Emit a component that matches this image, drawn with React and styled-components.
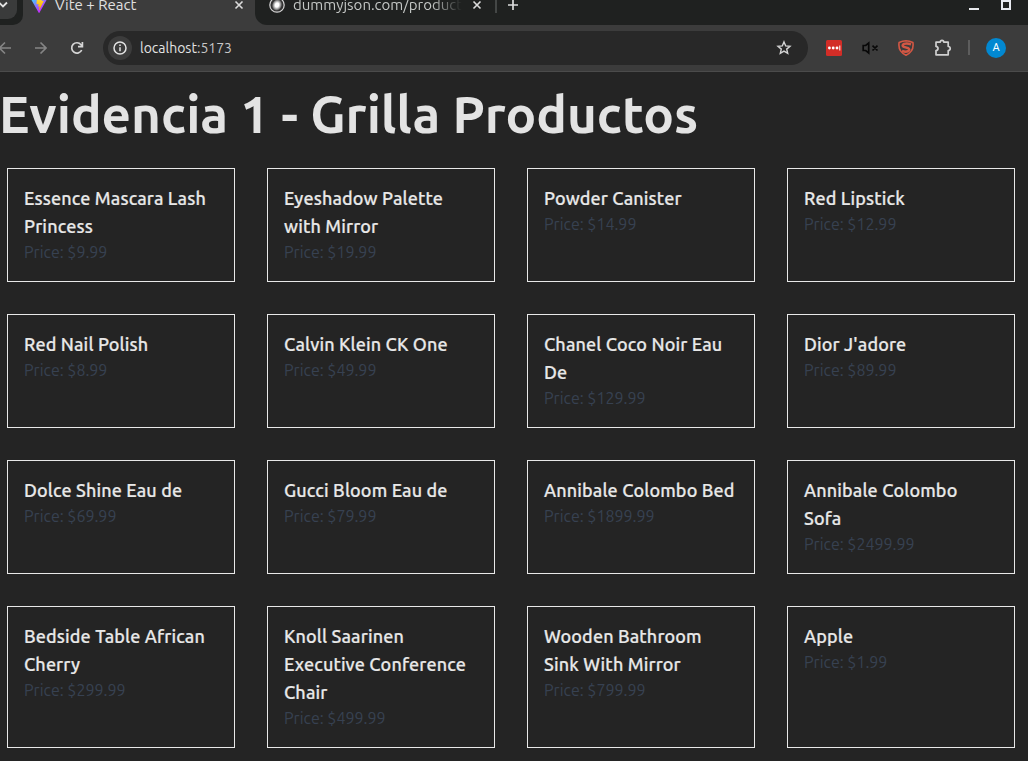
import React from "react";
import styled, { createGlobalStyle } from "styled-components";

const GlobalStyle = createGlobalStyle`
  *, *::before, *::after { box-sizing: border-box; }
  html, body { margin: 0; height: 100%; overflow: hidden; background: #242424; }
  body { font-family: Ubuntu, "Noto Sans", "Open Sans", sans-serif; color: #e3e3e3; }
  h1, h2, p { margin: 0; }
`;

const Window = styled.div`
  display: flex;
  flex-direction: column;
  width: 1028px;
  height: 761px;
  overflow: hidden;
`;

const TabStrip = styled.header`
  display: flex;
  height: 25px;
  background: #3c3c3c;
`;

const StripStart = styled.div`
  width: 23px;
  background: #1f2120;
  border-bottom-right-radius: 10px;
`;

const TabSearch = styled.div`
  width: 17px;
  height: 19px;
  background: #3a3b3b;
  border-bottom-right-radius: 9px;
  svg { display: block; }
`;

const ActiveTab = styled.div`
  display: flex;
  width: 232px;
  height: 12px;
  padding: 0 10px 0 8px;
  align-items: center;
`;

const StripRest = styled.div`
  display: flex;
  flex: 1;
  align-items: flex-start;
  padding-left: 14px;
  background: #1f2120;
  border-bottom-left-radius: 12px;
`;

const TabTitle = styled.span`
  flex: none;
  width: ${(p) => p.$width}px;
  height: 20px;
  margin: ${(p) => p.$top}px 0 0 ${(p) => p.$gap}px;
  white-space: nowrap;
  font-size: 15px;
  line-height: 20px;
  color: ${(p) => (p.$faded ? "#c4c7c5" : "#e0e0e0")};
  ${(p) => p.$faded && "mask-image: linear-gradient(90deg, #000 82%, transparent);"}
`;

const Glyph = styled.svg`
  display: block;
  flex: none;
  margin-left: ${(p) => p.$gap || 0}px;
`;

const Toolbar = styled.div`
  display: flex;
  align-items: center;
  height: 47px;
  padding-bottom: 1px;
  background: #3c3c3c;
  border-bottom: 1px solid #4b4b4b;
`;

const AddressBar = styled.div`
  display: flex;
  align-items: center;
  width: 705px;
  height: 34px;
  margin-left: 19px;
  padding: 0 16px 0 5px;
  border-radius: 17px;
  background: #282828;
`;

const SiteInfo = styled.div`
  display: grid;
  place-items: center;
  width: 24px;
  height: 24px;
  border-radius: 50%;
  background: #3c3c3c;
`;

const Address = styled.span`
  flex: 1;
  margin-left: 8px;
  font-size: 14px;
  line-height: 20px;
  color: #e3e3e3;
  span { color: #c7c7c7; }
`;

const Divider = styled.div`
  width: 2px;
  height: 15px;
  margin-left: 16px;
  background: #5d5d5d;
`;

const Avatar = styled.div`
  width: 20px;
  height: 20px;
  margin-left: 16px;
  border-radius: 50%;
  background: #0288d1;
  color: #fff;
  font: 400 11px/20px Roboto, sans-serif;
  text-align: center;
`;

const Page = styled.main`
  flex: 1;
  background: #242424;
`;

const Heading = styled.h1`
  height: 96px;
  margin-left: -1px;
  padding-top: 14px;
  font-size: 51.2px;
  line-height: 56px;
  font-weight: 600;
  white-space: nowrap;
  color: #e3e3e3;
`;

const Grid = styled.section`
  display: grid;
  grid-template-columns: repeat(4, 228px);
  gap: 32px;
  padding-left: 7px;
`;

const Card = styled.article`
  padding: 15px 18px 17px 16px;
  border: 1px solid #e8e8e8;
`;

const Name = styled.h2`
  font-size: 18px;
  line-height: 28px;
  font-weight: 500;
  letter-spacing: 0.13px;
  -webkit-text-stroke: 0.2px #e8e8e8;
  color: #e8e8e8;
`;

const Price = styled.p`
  font-size: 16px;
  line-height: 24px;
  font-weight: 400;
  color: #374151;
`;

const products = [
  ["Essence Mascara Lash Princess", "9.99"],
  ["Eyeshadow Palette with Mirror", "19.99"],
  ["Powder Canister", "14.99"],
  ["Red Lipstick", "12.99"],
  ["Red Nail Polish", "8.99"],
  ["Calvin Klein CK One", "49.99"],
  ["Chanel Coco Noir Eau De", "129.99"],
  ["Dior J'adore", "89.99"],
  ["Dolce Shine Eau de", "69.99"],
  ["Gucci Bloom Eau de", "79.99"],
  ["Annibale Colombo Bed", "1899.99"],
  ["Annibale Colombo Sofa", "2499.99"],
  ["Bedside Table African Cherry", "299.99"],
  ["Knoll Saarinen Executive Conference Chair", "499.99"],
  ["Wooden Bathroom Sink With Mirror", "799.99"],
  ["Apple", "1.99"],
];

const Close = ({ gap }) => (
  <Glyph $gap={gap} width="10" height="12" viewBox="0 0 10 12" stroke="#dcdcdc" strokeWidth="1.6">
    <path d="M1.5 1.5l7 7M8.5 1.5l-7 7" />
  </Glyph>
);

const TabIcon = styled(Glyph)`
  margin-top: -3px;
`;

const ViteLogo = () => (
  <TabIcon width="16" height="16" viewBox="0 0 256 257">
    <defs>
      <linearGradient id="shell" x1="-.8%" x2="57.6%" y1="7.7%" y2="78.4%">
        <stop offset="0" stopColor="#41d1ff" />
        <stop offset="1" stopColor="#bd34fe" />
      </linearGradient>
      <linearGradient id="bolt" x1="43%" x2="50%" y1="2%" y2="89%">
        <stop offset="0" stopColor="#ffea83" />
        <stop offset=".08" stopColor="#ffdd35" />
        <stop offset="1" stopColor="#ffa800" />
      </linearGradient>
    </defs>
    <path fill="url(#shell)" d="M255.153 37.938L134.897 252.976c-2.483 4.44-8.862 4.466-11.382.048L.875 37.958c-2.746-4.814 1.371-10.646 6.827-9.67l120.385 21.517a6.537 6.537 0 0 0 2.322-.004l117.867-21.483c5.438-.991 9.574 4.796 6.877 9.62Z" />
    <path fill="url(#bolt)" d="M185.432.063L96.44 17.501a3.268 3.268 0 0 0-2.634 3.014l-5.474 92.456a3.268 3.268 0 0 0 3.997 3.378l24.777-5.718c2.318-.535 4.413 1.507 3.936 3.838l-7.361 36.047c-.495 2.426 1.782 4.5 4.151 3.78l15.304-4.649c2.372-.72 4.652 1.36 4.15 3.788l-11.698 56.621c-.732 3.542 3.979 5.473 5.943 2.437l1.313-2.028l72.516-144.72c1.215-2.423-.88-5.186-3.54-4.672l-25.505 4.922c-2.396.462-4.435-1.77-3.759-4.114l16.646-57.705c.677-2.35-1.37-4.583-3.769-4.113Z" />
  </TabIcon>
);

export default function App() {
  return (
    <>
      <GlobalStyle />
      <Window>
        <TabStrip>
          <StripStart>
            <TabSearch>
              <svg width="8" height="10" viewBox="0 0 8 10" fill="none" stroke="#e3e3e3" strokeWidth="1.8">
                <path d="M-1 2.5l4 4 4-4" />
              </svg>
            </TabSearch>
          </StripStart>
          <ActiveTab>
            <ViteLogo />
            <TabTitle $gap={8} $width={179} $top={-3}>Vite + React</TabTitle>
            <Close gap={0} />
          </ActiveTab>
          <StripRest>
            <TabIcon width="16" height="16" viewBox="0 0 16 16">
              <defs>
                <radialGradient id="orb">
                  <stop offset=".35" stopColor="#fff" />
                  <stop offset=".75" stopColor="#8b8b8b" />
                  <stop offset="1" stopColor="#303030" />
                </radialGradient>
              </defs>
              <circle cx="8" cy="8" r="7.2" fill="#333" stroke="#d5d5d5" strokeWidth="1.2" />
              <ellipse cx="8" cy="8" rx="5" ry="6" fill="url(#orb)" transform="rotate(20 8 8)" />
            </TabIcon>
            <TabTitle $gap={8} $width={169} $top={-5} $faded>dummyjson.com/product</TabTitle>
            <Close gap={10} />
            <Glyph $gap={13} width="2" height="13"><path d="M1 0v13" stroke="#444746" strokeWidth="2" /></Glyph>
            <Glyph $gap={10} width="12" height="12" stroke="#dcdcdc" strokeWidth="1.7"><path d="M6 0v10M1 5h10" /></Glyph>
            <Glyph $gap={450} width="10" height="12"><path d="M0 8h10v2H0z" fill="#e8eaed" /></Glyph>
            <Glyph $gap={22} width="10" height="12"><path d="M0 0h10v10H0zM2 2v6h6V2z" fill="#e8eaf0" fillRule="evenodd" /></Glyph>
          </StripRest>
        </TabStrip>

        <Toolbar>
          <Glyph width="12" height="14" viewBox="0 0 12 14" fill="none" stroke="#858585" strokeWidth="1.6"><path d="M11 7H0M5 1.5L-.5 7 5 12.5" /></Glyph>
          <Glyph $gap={23} width="12" height="14" viewBox="0 0 12 14" fill="none" stroke="#858585" strokeWidth="1.6"><path d="M0 7h11M5.5 1.5L11 7l-5.5 5.5" /></Glyph>
          <Glyph $gap={23} width="14" height="14" viewBox="0 0 14 14" fill="none" stroke="#d5d5d5" strokeWidth="1.7"><path d="M11.7 9A5.2 5.2 0 1 1 11 3.7L12.5 5M12.4 1v4.7H8" /></Glyph>
          <AddressBar>
            <SiteInfo>
              <svg width="14" height="14" viewBox="0 0 14 14" fill="none" stroke="#e3e3e3" strokeWidth="1.5">
                <circle cx="7" cy="7" r="6" /><path d="M7 6.2v4M7 3.5V5" />
              </svg>
            </SiteInfo>
            <Address>localhost<span>:5173</span></Address>
            <Glyph width="16" height="16" viewBox="0 0 16 16" fill="none" stroke="#d5d5d5" strokeWidth="1.4" strokeLinejoin="miter">
              <path d="M8 1.9l1.7 4 4.3.4-3.3 2.8 1 4.2L8 11.1l-3.7 2.2 1-4.2L2 6.3l4.3-.4z" />
            </Glyph>
          </AddressBar>
          <Glyph $gap={18} width="16" height="16" viewBox="0 0 16 16">
            <rect width="16" height="16" rx="1.5" fill="#d32d27" />
            <g fill="#fff"><circle cx="3.4" cy="8" r="1.4" /><circle cx="7.2" cy="8" r="1.4" /><circle cx="11" cy="8" r="1.4" /><path d="M13.3 5.5h1v5h-1z" /></g>
          </Glyph>
          <Glyph $gap={20} width="17" height="14" viewBox="0 0 17 14" fill="none" stroke="#080808" strokeWidth="1.7">
            <path d="M1.2 4.5h2.5l3-2.5v10l-3-2.5H1.2zM10.5 4.7l5 4.8M15.5 4.7l-5 4.8" />
          </Glyph>
          <Glyph $gap={19} width="16" height="16" viewBox="0 0 16 16" fill="none" stroke="#d35744">
            <path d="M8 .8Q11.5.9 14.9 2.5 16.3 11.5 8 15.2-.3 11.5 1.1 2.5 4.5.9 8 .8z" strokeWidth="1.6" />
            <path d="M13 4.2Q9 3.1 6 3.9 3.3 5.4 6 6.9L10 8.1Q12.5 9.7 10 11.3 7.2 12.3 4 10.8" strokeWidth="2.5" />
          </Glyph>
          <Glyph $gap={20} width="18" height="18" viewBox="0 0 18 18" fill="none" stroke="#d0d0d0" strokeWidth="1.7" strokeLinejoin="round">
            <path d="M2 3.2h4.2C6.3.8 9.7.8 9.8 3.2h4.4v4.3c2.7.1 2.7 3.9 0 4v4.3H2v-4.2c2.7-.3 2.7-3.9 0-4.2z" />
          </Glyph>
          <Divider />
          <Avatar>A</Avatar>
        </Toolbar>

        <Page>
          <Heading>Evidencia 1 - Grilla Productos</Heading>
          <Grid>
            {products.map(([name, price]) => (
              <Card key={name}>
                <Name>{name}</Name>
                <Price>Price: ${price}</Price>
              </Card>
            ))}
          </Grid>
        </Page>
      </Window>
    </>
  );
}
